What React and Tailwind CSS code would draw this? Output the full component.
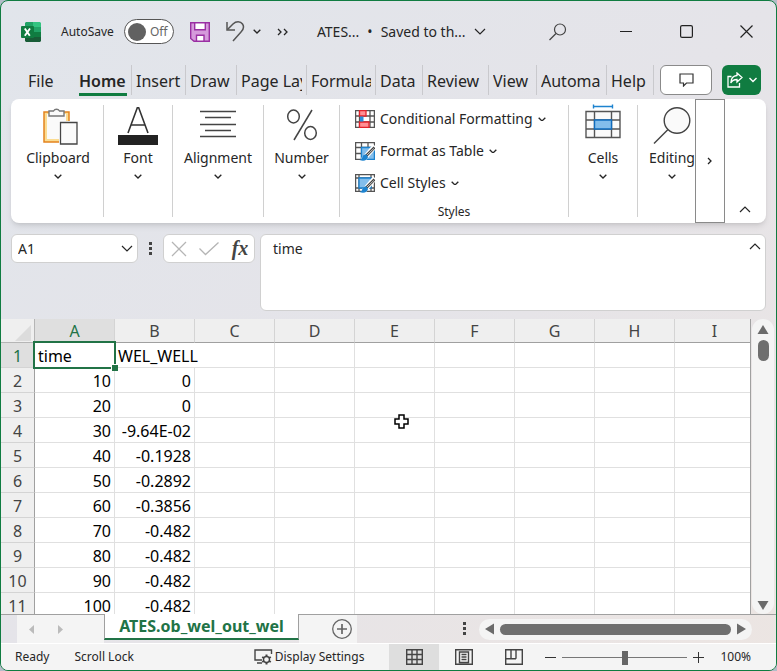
import clsx from 'clsx';

const TABS = [
  { name: 'Home', text: 'Home', width: 'w-[57px]', active: true },
  { name: 'Insert', text: 'Insert', width: 'w-[54px]' },
  { name: 'Draw', text: 'Draw', width: 'w-[51px]' },
  { name: 'Page Layout', text: 'Page Lay', width: 'w-[70px]' },
  { name: 'Formulas', text: 'Formula', width: 'w-[69px]' },
  { name: 'Data', text: 'Data', width: 'w-[47px]' },
  { name: 'Review', text: 'Review', width: 'w-[66px]' },
  { name: 'View', text: 'View', width: 'w-[48px]' },
  { name: 'Automate', text: 'Automa', width: 'w-[70px]' },
  { name: 'Help', text: 'Help', width: 'w-[47px]' },
];

const COLUMNS = ['A', 'B', 'C', 'D', 'E', 'F', 'G', 'H', 'I'];

const ROWS = [
  ['time', 'WEL_WELL'],
  ['10', '0'],
  ['20', '0'],
  ['30', '-9.64E-02'],
  ['40', '-0.1928'],
  ['50', '-0.2892'],
  ['60', '-0.3856'],
  ['70', '-0.482'],
  ['80', '-0.482'],
  ['90', '-0.482'],
  ['100', '-0.482'],
];

const Chevron = ({ className = 'w-2', d = 'M1 1l5 5 5-5', stroke = 2 }) => (
  <svg viewBox="0 0 12 7" className={className} fill="none" stroke="#262626" strokeWidth={stroke}>
    <path d={d} />
  </svg>
);

const Dots = () => (
  <svg width="4" height="14" fill="#444">
    <path d="M0 0h3v3H0zM0 5h3v3H0zM0 10h3v3H0z" />
  </svg>
);

const ExcelLogo = () => (
  <svg width="20" height="20" viewBox="0 0 20 20">
    <path d="M5 0h8v10H4V1z" fill="#21a366" />
    <path d="M12 0h7l1 1v5h-8z" fill="#33c481" />
    <path d="M4 5h8v5H4z" fill="#107c41" />
    <path d="M12 5h8v5h-8z" fill="#21a366" />
    <path d="M4 10h8v5H4z" fill="#185c37" />
    <path d="M12 10h8v5h-8z" fill="#107c41" />
    <path d="M4 15h16v4l-1 1H5l-1-1z" fill="#185c37" />
    <rect y="4" width="13" height="12" rx="1" fill="#107c41" />
    <path d="M3.8 6.5l5 7.2M9 6.5l-5.2 7.2" stroke="#fff" strokeWidth="1.9" />
  </svg>
);

const SaveIcon = () => (
  <svg width="20" height="20" viewBox="0 0 20 20" stroke="#9a2fa3" strokeWidth="1.4">
    <path d="M.7.7h18.6v18.6H4L.7 16.500z" fill="#d59adb" />
    <path d="M4.700.7h10.600v7H4.700zM6.500 19.300v-6h7.500v6z" fill="#fff" />
  </svg>
);

const UndoIcon = () => (
  <svg width="19" height="21" viewBox="0 0 19 21" fill="none" stroke="#555" strokeWidth="1.5">
    <path d="M1 1v8h8" />
    <path d="M1.500 8.500L7 3c3-3 7.500-3 9.500 0 2 3 1 5.500-1.500 8l-8 9" />
  </svg>
);

const ShareIcon = () => (
  <svg width="16" height="16" viewBox="0 0 16 16" fill="none" stroke="#fff" strokeWidth="1.300">
    <path d="M4.500 4.500H1v10.500h11.500V11" />
    <path d="M10 1l5 4.500-5 4.500V7.500C7 7.500 5 8.500 3.800 11 4 6.500 6.500 3.700 10 3.500z" />
  </svg>
);

const ClipboardIcon = () => (
  <svg width="35" height="39" viewBox="0 1 35 39" className="ml-1">
    <path d="M1 6h25v30H1z" fill="#fbdc92" stroke="#e3831e" strokeWidth="1.500" />
    <path d="M4 8h19v25H4z" fill="#fafafa" />
    <path d="M6 10V5h4.500a3.500 3.500 0 016 0H21v5z" fill="#fafafa" stroke="#777" strokeWidth="1.400" />
    <path d="M16 15h19v24H16z" fill="#fff" />
    <path d="M17.500 16.500h16.500v21.500H17.500z" fill="#fafafa" stroke="#444" strokeWidth="1.300" />
  </svg>
);

const FontIcon = () => (
  <svg width="40" height="39" viewBox="0 0 40 39">
    <path d="M10 26L19.300.8h1.400L30 26M13.500 18h13" fill="none" stroke="#333" strokeWidth="1.600" />
    <path d="M0 28h40v10H0z" fill="#222" />
  </svg>
);

const AlignIcon = () => (
  <svg width="36" height="39" viewBox="0 0 36 39" stroke="#444" strokeWidth="1.300">
    <path d="M0 4.500h36M5 10.500h26M0 17.500h36M5 23.500h26M0 29.500h36" />
  </svg>
);

const PercentIcon = () => (
  <svg width="32" height="39" viewBox="0 0 32 39" fill="none" stroke="#444" strokeWidth="1.500">
    <ellipse cx="7.500" cy="9.500" rx="5.800" ry="6.500" />
    <ellipse cx="24.500" cy="26" rx="5.800" ry="6.500" />
    <path d="M26 3L8 33" />
  </svg>
);

const CellsIcon = () => (
  <svg width="36" height="39" viewBox="0 3 36 39" className="overflow-visible" fill="#fafafa" stroke="#555" strokeWidth="1.400">
    <path d="M8.500 2.500h19M8.500 .5v4M27.500 .5v4" stroke="#1d83cf" />
    <path d="M1 7.500h34v26H1zM9.500 7.500v26M26.500 7.500v26M1 16h34M1 25h34" />
    <path d="M9.500 16h17v9h-17z" fill="#83beec" stroke="#0f6cbd" />
  </svg>
);

const LensIcon = () => (
  <svg width="38" height="39" viewBox="0 1 38 39" fill="#fafafa" stroke="#444" strokeWidth="1.400">
    <circle cx="24" cy="14.500" r="12.800" />
    <path d="M15 23.500L1 37.500" />
  </svg>
);

const ConditionalIcon = () => (
  <svg width="20" height="18" viewBox="0 0 20 18" fill="#fff" stroke="#555" strokeWidth="1.300">
    <path d="M.6.6h18.800v16.800H.6zM4.500.6v16.800M15 .6v16.800M.6 6h18.800M.6 12h18.800" />
    <path d="M4.500.6h6.500V6H4.500zM4.500 12h9.500v5.400H4.500z" fill="#ff8f94" stroke="#e3222b" />
    <path d="M5 6.500h3.500v5H5z" fill="#2b8fdb" stroke="none" />
  </svg>
);

const Brush = () => (
  <>
    <path d="M20 4L8 18" stroke="#fff" strokeWidth="5" />
    <path d="M19.500 5.500L11 14" stroke="#444" strokeWidth="2.600" />
    <path d="M18.800 6.500L12 13" stroke="#fff" strokeWidth=".7" />
    <path d="M11.500 12.500c-3-.5-4 1-4.300 3-.4 1.500-1.200 2-2.700 2.500 4 1.500 8 .5 8.500-3z" fill="#1d83cf" stroke="none" />
  </>
);

const TableIcon = () => (
  <svg width="20" height="19" viewBox="0 0 20 19" fill="#fff" stroke="#555" strokeWidth="1.300">
    <path d="M.6.6h18.800v16.800H.6zM6.500.6v16.800M13 .6v16.800M.6 5.500h18.800M.6 11.500h18.800" />
    <path d="M6.500 5.500h12.900v11.900H6.500z" fill="#83beec" stroke="#1d83cf" />
    <Brush />
  </svg>
);

const CellStylesIcon = () => (
  <svg width="20" height="19" viewBox="0 0 20 19" fill="#fff" stroke="#555" strokeWidth="1.300">
    <path d="M.6.6h18.800v16.800H.6zM4 .6v16.800M16 .6v16.800M.6 4h18.800M.6 14h18.800" />
    <path d="M4 4h12v10H4z" fill="#83beec" stroke="#1d83cf" />
    <Brush />
  </svg>
);

const RibbonGroup = ({ label, icon, className }) => (
  <div className={clsx('h-[112px] shrink-0 pt-0.5', className)}>
    <button className="flex w-full flex-col items-center">
      {icon}
      <span className="mt-0.5 text-sm leading-5">{label}</span>
      <Chevron className="mt-1.5 w-2" />
    </button>
  </div>
);

const StyleButton = ({ label, icon }) => (
  <button className="flex h-8 items-center gap-[5px] text-sm">
    {icon}
    <span>{label}</span>
    <Chevron className="w-2" />
  </button>
);

const TitleBar = () => (
  <header className="flex h-[61px] shrink-0 items-center pl-5">
    <ExcelLogo />
    <label className="ml-5 flex items-center gap-2.5 text-xs">
      AutoSave
      <span className="flex h-[25px] w-[50px] items-center gap-1 rounded-full border border-[#555] bg-white pl-[3px] text-[#666]">
        <input type="checkbox" className="size-[18px] appearance-none rounded-full bg-[#616161]" />
        Off
      </span>
    </label>
    <button aria-label="Save" className="ml-4"><SaveIcon /></button>
    <button aria-label="Undo" className="ml-4"><UndoIcon /></button>
    <button aria-label="Undo history" className="ml-2"><Chevron /></button>
    <button aria-label="More commands" className="ml-4">
      <svg width="12" height="8" fill="none" stroke="#262626" strokeWidth="1.300">
        <path d="M1 1l3 3-3 3M7 1l3 3-3 3" />
      </svg>
    </button>
    <button className="ml-7 flex items-center gap-2 whitespace-nowrap text-sm">
      ATES... <span>•</span> Saved to th...
      <Chevron className="w-3" stroke={1.2} />
    </button>
    <div className="ml-auto flex">
      <button aria-label="Search" className="mr-7 flex w-5 items-center justify-center">
        <svg width="18" height="18" fill="none" stroke="#444" strokeWidth="1.200">
          <circle cx="11" cy="6.500" r="5.500" />
          <path d="M7 10.500L.5 17" />
        </svg>
      </button>
      <button aria-label="Minimize" className="flex h-8 w-[60px] items-center justify-center">
        <svg width="12" height="12" stroke="#222"><path d="M0 5.500h12" /></svg>
      </button>
      <button aria-label="Maximize" className="flex h-8 w-[60px] items-center justify-center">
        <svg width="13" height="13" fill="none" stroke="#222" strokeWidth="1.200">
          <rect x=".6" y=".6" width="11.800" height="11.800" rx="1.500" />
        </svg>
      </button>
      <button aria-label="Close" className="flex h-8 w-[60px] items-center justify-center">
        <svg width="13" height="13" stroke="#222" strokeWidth="1.200"><path d="M.5.5l12 12M12.500.5l-12 12" /></svg>
      </button>
    </div>
  </header>
);

const TabStrip = () => (
  <nav className="flex h-[37px] shrink-0 items-start pt-[3px] text-base">
    <button className="h-8 w-[74px] shrink-0 pl-[27px] text-left">File</button>
    {TABS.map((tab) => (
      <button
        key={tab.name}
        aria-label={tab.name}
        className={clsx('h-[30px] shrink-0 border-r border-[#c9c9cd] px-1', tab.width, tab.active && 'font-semibold')}
      >
        <span
          className={clsx(
            'flex h-[31px] justify-start overflow-hidden whitespace-nowrap leading-8',
            tab.active && 'border-b-3 border-[#107c41]'
          )}
        >
          {tab.text}
        </span>
      </button>
    ))}
    <div className="ml-auto flex gap-2.5 pr-[15px]">
      <button aria-label="Comments" className="flex h-[30px] w-[52px] items-center justify-center rounded-md border border-[#8a8a8a] bg-white">
        <svg width="15" height="14" fill="none" stroke="#333" strokeWidth="1.200">
          <path d="M1 1h13v9H7.500l-3 3v-3H1z" />
        </svg>
      </button>
      <button aria-label="Share" className="flex h-[30px] w-[39px] items-center justify-center gap-1.5 rounded-md bg-[#107c41]">
        <ShareIcon />
        <svg width="8" height="6" fill="none" stroke="#fff" strokeWidth="1.400"><path d="M.5 1L4 4.500 7.500 1" /></svg>
      </button>
    </div>
  </nav>
);

const Ribbon = () => (
  <section className="mx-2.5 flex h-[124px] shrink-0 overflow-hidden rounded-lg bg-white shadow-md">
    <div className="flex min-w-0 flex-1 overflow-hidden pt-1.5">
      <RibbonGroup label="Clipboard" icon={<ClipboardIcon />} className="w-[93px] border-r border-[#d0d0d0] pl-0.5" />
      <RibbonGroup label="Font" icon={<FontIcon />} className="w-[69px] border-r border-[#d0d0d0]" />
      <RibbonGroup label="Alignment" icon={<AlignIcon />} className="w-[91px] border-r border-[#d0d0d0]" />
      <RibbonGroup label="Number" icon={<PercentIcon />} className="w-[76px] border-r border-[#d0d0d0]" />
      <div className="flex h-[112px] min-w-[229px] flex-1 flex-col items-start border-r border-[#d0d0d0] pl-[15px]">
        <div className="-mt-0.5 flex flex-col">
          <StyleButton label="Conditional Formatting" icon={<ConditionalIcon />} />
          <StyleButton label="Format as Table" icon={<TableIcon />} />
          <StyleButton label="Cell Styles" icon={<CellStylesIcon />} />
        </div>
        <span className="mt-[5px] self-center pr-[15px] text-xs">Styles</span>
      </div>
      <RibbonGroup label="Cells" icon={<CellsIcon />} className="w-[69px] border-r border-[#d0d0d0]" />
      <RibbonGroup label="Editing" icon={<LensIcon />} className="w-[58px] pl-2.5" />
    </div>
    <button aria-label="Scroll ribbon" className="flex w-[30px] items-center justify-center border border-[#8a8a8a]">
      <svg width="6" height="8" fill="none" stroke="#222" strokeWidth="1.300"><path d="M1 1l3 3-3 3" /></svg>
    </button>
    <button aria-label="Collapse ribbon" className="flex w-[41px] items-end justify-center pr-0.5 pb-2.5">
      <Chevron className="w-3" d="M1 6l5-5 5 5" stroke={1.2} />
    </button>
  </section>
);

const FormulaBar = () => (
  <section className="mx-2.5 mt-[11px] flex h-[77px] shrink-0 items-start">
    <div className="flex h-[29px] w-[127px] shrink-0 items-center rounded-md border border-[#d0d0d0] bg-white pr-1">
      <input aria-label="Name box" defaultValue="A1" className="min-w-0 flex-1 bg-transparent pl-1.5 text-sm outline-none" />
      <button aria-label="Name list"><Chevron className="w-3" stroke={1.2} /></button>
    </div>
    <div className="flex h-[29px] w-[25px] shrink-0 items-center justify-center"><Dots /></div>
    <div className="flex h-[29px] w-[92px] shrink-0 items-center justify-between rounded-md border border-[#d0d0d0] bg-white pr-1 pl-[7px]">
      <button aria-label="Cancel">
        <svg width="16" height="16" stroke="#b5b5b5" strokeWidth="1.300"><path d="M1 1l14 14M15 1L1 15" /></svg>
      </button>
      <button aria-label="Enter">
        <svg width="20" height="14" fill="none" stroke="#b5b5b5" strokeWidth="1.300"><path d="M.5 6.500l6 6L19.500.5" /></svg>
      </button>
      <button aria-label="Insert function" className="w-5 pb-0.5 font-['Liberation_Serif',serif] text-xl leading-6 font-bold text-[#444] italic">fx</button>
    </div>
    <div className="ml-[5px] flex h-full min-w-0 flex-1 items-start rounded-md border border-[#d0d0d0] bg-white pr-1">
      <textarea
        aria-label="Formula bar"
        defaultValue="time"
        className="h-full min-w-0 flex-1 resize-none bg-transparent py-1 pl-3 text-sm outline-none"
      />
      <button aria-label="Collapse formula bar" className="mt-2"><Chevron className="w-3" d="M1 6l5-5 5 5" stroke={1.2} /></button>
    </div>
  </section>
);

const Sheet = () => (
  <div className="relative min-w-0 flex-1 overflow-hidden border-r border-[#a0a0a0] bg-white">
    <table className="w-[754px] min-w-full table-fixed border-separate border-spacing-0 text-base leading-[22px]">
      <colgroup>
        <col className="w-[34px]" />
        {COLUMNS.map((c) => <col key={c} className="w-20" />)}
      </colgroup>
      <thead>
        <tr className="h-6 bg-[#efefef] text-[#444]">
          <th aria-label="Select all" className="border-r border-b border-[#b5b5b5] p-0">
            <svg width="30" height="20" fill="#dcdcdc" className="block"><path d="M30 4v16H14z" /></svg>
          </th>
          {COLUMNS.map((c) => (
            <th
              key={c}
              className={clsx(
                'border-r border-b border-[#d4d4d4] border-b-[#a0a0a0] p-0 font-normal',
                c === 'A' && 'bg-[#dfdfdf] text-[#217346]'
              )}
            >
              {c}
            </th>
          ))}
        </tr>
      </thead>
      <tbody>
        {ROWS.map((row, r) => (
          <tr key={row[0]} className="h-[25px]">
            <th
              className={clsx(
                'border-r border-b border-[#d4d4d4] border-r-[#a0a0a0] px-0 pt-0.5 pb-0 font-normal',
                r === 0 ? 'bg-[#dfdfdf] text-[#217346]' : 'bg-[#efefef] text-[#444]'
              )}
            >
              {r + 1}
            </th>
            {COLUMNS.map((c, i) => (
              <td
                key={c}
                className={clsx(
                  'border-b border-[#e0e0e0] px-[3px] pt-0.5 pb-0 whitespace-nowrap text-black',
                  r === 0 ? 'relative text-left' : 'text-right',
                  !(r === 0 && i === 1) && 'border-r'
                )}
              >
                {row[i]}
                {r === 0 && i === 0 && (
                  <span className="absolute -top-0.5 -left-0.5 z-10 h-7 w-[83px] border-2 border-[#217346]">
                    <span className="absolute -right-1 -bottom-1 size-[7px] border-t border-l border-white bg-[#217346]" />
                  </span>
                )}
              </td>
            ))}
          </tr>
        ))}
      </tbody>
    </table>
    <svg width="16" height="16" viewBox="0 0 16 16" className="absolute top-[95px] left-[393px]" fill="#fff" stroke="#000" strokeWidth="1.500">
      <path d="M5 1h5v4h4v5h-4v4H5v-4H1V5h4z" />
    </svg>
  </div>
);

const VerticalScroll = () => (
  <div className="mr-0.5 ml-px flex w-[22px] flex-col items-center rounded-full bg-[#f4f4f4] pt-1.5 pb-1">
    <button aria-label="Scroll up">
      <svg width="12" height="9" className="block" fill="#6b6b6b"><path d="M6 0l5.500 9H.5z" /></svg>
    </button>
    <div className="mt-1.5 h-[21px] w-[11px] rounded-full bg-[#6f6f6f]" />
    <button aria-label="Scroll down" className="mt-auto">
      <svg width="12" height="9" className="block" fill="#6b6b6b"><path d="M.5 0h11L6 9z" /></svg>
    </button>
  </div>
);

const SheetTabs = () => (
  <div className="flex h-[29px] shrink-0">
    <div className="w-4 border-t border-[#a0a0a0]" />
    <div className="flex w-[87px] items-center gap-6 border-t border-[#a0a0a0] bg-[#f4f4f4] pl-3">
      <button aria-label="Previous sheet"><svg width="5" height="9" fill="#bbb"><path d="M5 0v9L0 4.500z" /></svg></button>
      <button aria-label="Next sheet"><svg width="5" height="9" fill="#bbb"><path d="M0 0v9l5-4.500z" /></svg></button>
    </div>
    <button className="h-[26px] min-w-[195px] border-x border-b-2 border-[#a0a0a0] border-b-[#217346] bg-white px-[11px] text-base leading-[22px] font-bold text-[#217346]">
      ATES.ob_wel_out_wel
    </button>
    <div className="flex w-[58px] items-center justify-end border-t border-[#a0a0a0] bg-[#f4f4f4] pr-[5px]">
      <button aria-label="New sheet">
        <svg width="20" height="20" fill="none" stroke="#666" strokeWidth="1.300" className="block">
          <circle cx="10" cy="10" r="9.300" />
          <path d="M10 5v10M5 10h10" strokeWidth="1.700" />
        </svg>
      </button>
    </div>
    <div className="flex min-w-0 flex-1 items-center border-t border-[#a0a0a0]">
      <div className="flex flex-1 justify-end pr-3"><Dots /></div>
      <div className="mr-6 flex h-[21px] w-[273px] items-center rounded-full bg-[#f4f4f4] px-1.5">
        <button aria-label="Scroll left"><svg width="9" height="12" className="block" fill="#6b6b6b"><path d="M9 .5v11L0 6z" /></svg></button>
        <div className="mx-1.5 h-[11px] flex-1 rounded-full bg-[#6f6f6f]" />
        <button aria-label="Scroll right"><svg width="9" height="12" className="block" fill="#6b6b6b"><path d="M0 .5v11L9 6z" /></svg></button>
      </div>
    </div>
  </div>
);

const StatusBar = () => (
  <footer className="flex h-[27px] shrink-0 items-center border-t border-white bg-[#f4f4f4] text-xs">
    <span className="ml-3.5">Ready</span>
    <span className="ml-[25px]">Scroll Lock</span>
    <div className="ml-auto flex h-full items-center">
      <button className="mr-[25px] flex items-center gap-0.5">
        <svg width="19" height="16" fill="none" stroke="#444" strokeWidth="1.400">
          <path d="M17.500 5V1H1v10h7M3 14h5" />
          <circle cx="12.500" cy="10.500" r="3" />
          <path d="M12.500 5.500v2M12.500 13.500v2M8.200 8l1.700 1M15.100 12l1.700 1M8.200 13l1.700-1M15.100 9l1.700-1" strokeWidth="2" />
        </svg>
        Display Settings
      </button>
      <button aria-label="Normal view" className="flex h-full w-[50px] items-center justify-center bg-[#dedede]">
        <svg width="17" height="16" fill="none" stroke="#444" strokeWidth="1.400">
          <path d="M.7.7h15.600v14.600H.7zM6 .7v14.600M11 .7v14.600M.7 5.500h15.600M.7 10.500h15.600" />
        </svg>
      </button>
      <button aria-label="Page layout view" className="flex h-full w-[50px] items-center justify-center">
        <svg width="18" height="16" fill="none" stroke="#444" strokeWidth="1.400">
          <path d="M.7.7h16.600v14.600H.7zM4.500 3h9v10.500h-9zM6.500 5.500h5M6.500 8h5M6.500 10.500h5" />
        </svg>
      </button>
      <button aria-label="Page break view" className="flex h-full w-[50px] items-center justify-center">
        <svg width="18" height="16" fill="none" stroke="#444" strokeWidth="1.400">
          <path d="M.7.7h16.600v14.600H.7zM6 .7v9M11 .7v9M.7 9.700H11" />
        </svg>
      </button>
      <button aria-label="Zoom out" className="ml-1.5">
        <svg width="11" height="11" stroke="#333"><path d="M0 5.500h11" /></svg>
      </button>
      <input
        type="range"
        aria-label="Zoom"
        defaultValue="50"
        className="mx-1.5 h-4 w-[125px] appearance-none bg-transparent [&::-webkit-slider-runnable-track]:h-px [&::-webkit-slider-runnable-track]:bg-[#777] [&::-webkit-slider-thumb]:-mt-1.5 [&::-webkit-slider-thumb]:h-3.5 [&::-webkit-slider-thumb]:w-1.5 [&::-webkit-slider-thumb]:appearance-none [&::-webkit-slider-thumb]:bg-[#666]"
      />
      <button aria-label="Zoom in">
        <svg width="11" height="11" stroke="#333"><path d="M0 5.500h11M5.500 0v11" /></svg>
      </button>
      <span className="mr-[25px] ml-4">100%</span>
    </div>
  </footer>
);

export default function App() {
  return (
    <div className="h-screen bg-[#b4bcc8]">
      <div className="flex h-full flex-col overflow-hidden rounded-lg border border-[#107c41] bg-linear-to-br from-[#e1e5eb] via-[#e5e4e9] to-[#ece5e2] font-['Noto_Sans','Open_Sans',sans-serif] text-[#262626]">
        <TitleBar />
        <TabStrip />
        <Ribbon />
        <FormulaBar />
        <main className="mt-2 flex min-h-0 flex-1">
          <Sheet />
          <VerticalScroll />
        </main>
        <SheetTabs />
        <StatusBar />
      </div>
    </div>
  );
}
